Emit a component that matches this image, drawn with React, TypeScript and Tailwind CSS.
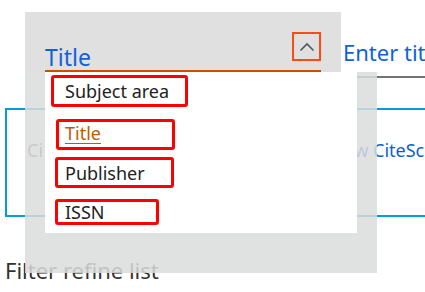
import React from 'react';

const fieldOptions = [
  { id: 'subject', label: 'Subject area', box: 'ml-[6px] mt-[3px] w-[137px] h-[32px] pl-[11px]' },
  { id: 'title', label: 'Title', box: 'ml-[11px] mt-[12px] w-[119px] h-[31px] pl-[6px] pb-[3px]', active: true },
  { id: 'publisher', label: 'Publisher', box: 'ml-[10px] mt-[7px] w-[119px] h-[31px] pl-[7px]' },
  { id: 'issn', label: 'ISSN', box: 'ml-[10px] mt-[11px] w-[104px] h-[26px] pl-[7px]' }
];

const App: React.FC = () => {
  return (
    <div
      className="relative w-[425px] h-[292px] overflow-hidden bg-white"
      style={{ fontFamily: '"Noto Sans", "Open Sans", sans-serif' }}
    >
      {/* Search row */}
      <div className="flex items-start ml-[25px] pt-[12px]">
        <div className="w-[316px] h-[60px] bg-[#e0e0e0] px-[20px] flex flex-col justify-end">
          <div className="h-[40px] flex items-end justify-between border-b-2 border-[#d04a02]">
            <span className="text-[23px] leading-[26px] text-[#1062d8]">Title</span>
            <button className="mb-[9px] w-[29px] h-[29px] border-2 border-[#ff4a12] flex items-center justify-center">
              <svg width="16" height="10" viewBox="0 0 16 10" fill="none">
                <path d="M1.5 8.5 L8 2 L14.5 8.5" stroke="#4f5862" strokeWidth="1.6" />
              </svg>
            </button>
          </div>
        </div>
        <div className="ml-[2px] flex-1 min-w-0 h-[66px] border-b-2 border-[#737373] flex items-end pb-[10px] overflow-hidden">
          <span className="text-[22px] leading-[28px] text-[#1062d8] whitespace-nowrap">
            Enter title
          </span>
        </div>
      </div>

      {/* Info box */}
      <div className="ml-[5px] mt-[30px] w-[440px] h-[109px] border-2 border-[#009ed6] pl-[20px] pt-[28px]">
        <div className="flex text-[18px] leading-[24px] whitespace-nowrap">
          <span className="w-[302px] shrink-0 text-[#5a5a5a]">Ci</span>
          <span className="shrink-0 text-[#0c5fd0]">View CiteScore</span>
        </div>
      </div>

      <div className="ml-[5px] mt-[38px] text-[22px] leading-[30px] text-[#323232]">Filter refine list</div>

      {/* Overlay + dropdown */}
      <div className="absolute left-[25px] top-[72px] w-[352px] h-[201px] bg-[rgba(218,220,220,0.85)]" />
      <ul className="absolute left-[45px] top-[72px] w-[312px] h-[161px] bg-white flex flex-col">
        {fieldOptions.map(option => (
          <li
            key={option.id}
            className={`${option.box} border-[3px] border-[#ff0000] rounded-[3px] flex items-center text-[18px] leading-[24px]`}
          >
            <span
              className={
                option.active
                  ? 'text-[#c45a00] underline decoration-[#c45a00] underline-offset-[3px]'
                  : 'text-[#222222]'
              }
            >
              {option.label}
            </span>
          </li>
        ))}
      </ul>
    </div>
  );
};

export default App;
